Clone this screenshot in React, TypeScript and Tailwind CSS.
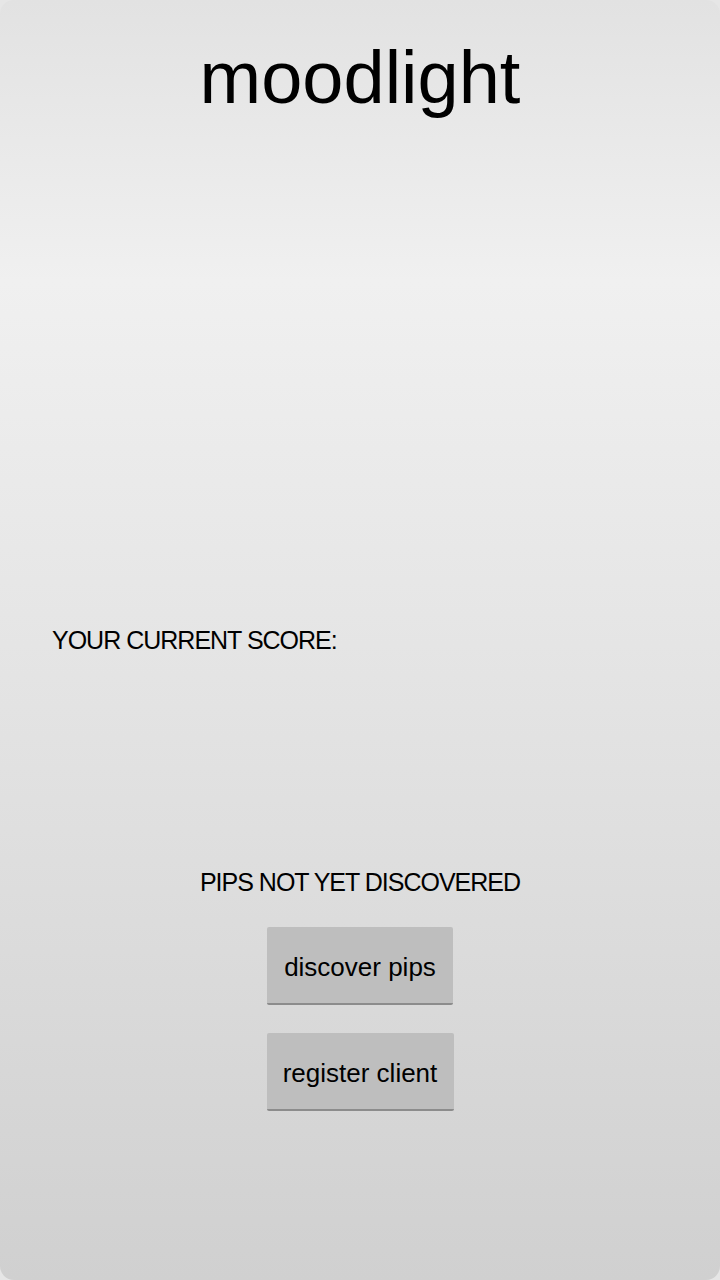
import React from 'react';

export default function App() {
  const font = { fontFamily: '"Liberation Sans", Arial, sans-serif' };
  return (
    <div className="w-[720px] h-[1280px] bg-[#e6e6e6]" style={font}>
      <div className="w-full h-full rounded-[14px] overflow-hidden flex flex-col bg-[linear-gradient(180deg,#e2e2e2_0%,#f0f0f0_22%,#e6e6e6_48%,#dcdcdc_72%,#d0d0d0_100%)]">
        {/* Title */}
        <h1 className="pt-[28px] text-center text-[74px] leading-[100px] text-black">moodlight</h1>

        {/* Score */}
        <div className="mt-[496px] px-[52px]">
          <p className="text-[25px] leading-[32px] tracking-[-1px] text-black">YOUR CURRENT SCORE:</p>
        </div>

        {/* Pips */}
        <div className="mt-[210px] flex flex-col items-center">
          <p className="text-[25px] leading-[32px] tracking-[-1px] text-black">PIPS NOT YET DISCOVERED</p>
          <button className="mt-[29px] w-[186px] h-[78px] pt-[4px] bg-[#bebebe] border-b-2 border-[#8c8c8c] rounded-[2px] text-[26px] text-black">
            discover pips
          </button>
          <button className="mt-[28px] w-[187px] h-[78px] pt-[4px] bg-[#bebebe] border-b-2 border-[#8c8c8c] rounded-[2px] text-[26px] text-black">
            register client
          </button>
        </div>
      </div>
    </div>
  );
}
